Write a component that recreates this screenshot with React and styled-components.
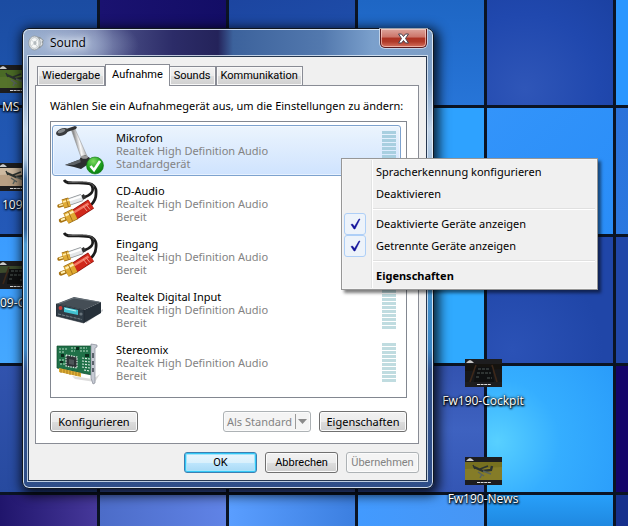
import React, { useState } from 'react';
import styled, { createGlobalStyle, css } from 'styled-components';

const GlobalStyle = createGlobalStyle`
  * {
    box-sizing: border-box;
  }

  body {
    margin: 0;
    font-family: 'Noto Sans', 'Open Sans', sans-serif;
    font-size: 11px;
    line-height: 13px;
    color: #000;
    overflow: hidden;
  }

  button {
    font: inherit;
    color: inherit;
  }
`;

/* ---------- desktop ---------- */

const Desktop = styled.main`
  position: relative;
  min-height: 100vh;
  padding: 28px 22px 37px;
  overflow: hidden;
`;

const Wallpaper = styled.div`
  position: absolute;
  inset: 0;
  display: grid;
  grid-template-columns: 97px repeat(4, 126px) 1fr;
  grid-template-rows: 105px repeat(3, 126px) 1fr;
  gap: 3px;
  background: #0b1424;
`;

const Tile = styled.div`
  background: ${({ $fill }) => $fill};
`;

const tiles = [
  'linear-gradient(#1b4ca2, #1e55ae)',
  'linear-gradient(to right, #1a1270, #130d66)',
  'linear-gradient(160deg, #1c45a0, #2056b4)',
  'linear-gradient(#1e66c4, #2775d8)',
  'radial-gradient(circle at 30% 85%, #2f56b8, #2048ae 60%, #1b41a2)',
  '#2b97ff',

  'linear-gradient(#2056b0, #2459b8)',
  '#171070',
  '#2560c0',
  '#2ea2ff',
  'linear-gradient(135deg, #3394fa, #298df8)',
  'linear-gradient(#2a72da, #2b78e0)',

  'linear-gradient(#3b9cff, #45a8ff)',
  '#2a80e0',
  '#2a80e0',
  '#30aaff',
  'radial-gradient(circle at 20% 90%, #2b52b6, #2046a8 60%)',
  '#2046a8',

  'linear-gradient(#3153ae, #274a9f)',
  '#4060c0',
  '#4060c0',
  'linear-gradient(#3353b0, #3e62c0 50%, #3456b4)',
  'radial-gradient(circle at 8% 60%, #58d0ff, #35aeff 45%, #2a9cfa)',
  '#14046a',

  'linear-gradient(to right, #20156c, #46389a)',
  'linear-gradient(to right, #4c6cc8, #6083e6)',
  'linear-gradient(to right, #5a9eff, #3c7fe0)',
  'linear-gradient(to right, #429aff, #4796f4)',
  'linear-gradient(#28a0fa, #1f88e0)',
  '#16308c',
];

const Shortcut = styled.figure`
  position: absolute;
  left: ${({ $x }) => $x}px;
  top: ${({ $y }) => $y}px;
  width: ${({ $w }) => $w || 100}px;
  margin: 0;
  display: flex;
  flex-direction: column;
  align-items: ${({ $start }) => ($start ? 'flex-start' : 'center')};
  gap: 6px;
`;

const ShortcutLabel = styled.figcaption`
  padding-left: ${({ $indent }) => $indent || 0}px;
  font-family: 'Open Sans', 'Noto Sans', sans-serif;
  font-size: 12px;
  line-height: 16px;
  white-space: nowrap;
  color: #fff;
  text-shadow: 0 1px 2px #000, 1px 1px 2px #000, 0 0 3px #000;
`;

/* ---------- window frame ---------- */

const Window = styled.section`
  position: relative;
  width: 100%;
  max-width: 412px;
  padding: 0 6px 7px 5px;
  border: 1px solid #10161f;
  border-radius: 7px;
  background:
    radial-gradient(ellipse 70px 30px at 46px 16px, rgba(190, 208, 232, 0.8), transparent),
    linear-gradient(transparent 50px, #c2d4e8 100px, #a9c3de 130px, #3d6a9c 150px, #2f5f98 200px, #4d9ad2 215px, #3b86c4 320px, #34558f 342px, #2f4e88),
    linear-gradient(to right, #8aa3c6, #68719f 72px, #4b5087 90px, #2c2c68 150px, #24235a 195px, #3c629c 210px, #5379ae 300px, #7ba0cc 350px, #7e9fc6);
  box-shadow: inset 0 0 0 1px rgba(235, 243, 252, 0.85), 2px 3px 12px 3px rgba(0, 0, 0, 0.8);
`;

const TitleBar = styled.header`
  display: flex;
  align-items: center;
  gap: 6px;
  height: 27px;
`;

const Title = styled.h1`
  flex: 1;
  margin: 0;
  font-family: 'Open Sans', 'Noto Sans', sans-serif;
  font-size: 12px;
  line-height: 16px;
  font-weight: 400;
  text-shadow: 0 0 6px #fff, 0 0 10px #fff;
`;

const CloseButton = styled.button`
  align-self: flex-start;
  display: grid;
  place-items: center;
  width: 47px;
  height: 19px;
  padding: 0;
  border: 1px solid #5c1a1c;
  border-top: 0;
  border-radius: 0 0 5px 5px;
  background: linear-gradient(#dda59c, #cc7468 45%, #ad3323 50%, #b03a28 70%, #d4715e);
  box-shadow: inset 0 0 0 1px rgba(255, 220, 214, 0.6), 0 0 0 1px rgba(230, 236, 246, 0.65);
`;

const Client = styled.div`
  padding: 7px 7px 7px 6px;
  border: 1px solid #26374f;
  background: #f0f0f0;
  box-shadow: 0 0 0 1px rgba(225, 236, 248, 0.8);
`;

/* ---------- tabs ---------- */

const TabList = styled.div`
  display: flex;
  align-items: flex-end;
  padding-left: 2px;
`;

const Tab = styled.button`
  height: 19px;
  padding: 0 4px 1px;
  border: 1px solid #898c95;
  border-left-width: ${({ $joined }) => ($joined ? 0 : 1)}px;
  border-bottom: 0;
  background: linear-gradient(#f3f3f3, #ebebeb 50%, #dddddd 51%, #d0d0d0);
  box-shadow: inset 0 0 0 1px #f8f8f8;
  font-family: Roboto, 'Noto Sans', sans-serif;
  white-space: nowrap;

  ${({ $active }) =>
    $active &&
    css`
      position: relative;
      height: 22px;
      margin-bottom: -1px;
      padding: 0 6px 3px;
      background: #fff;
      box-shadow: none;
    `}
`;

const TabPanel = styled.div`
  padding: 13px 11px 11px 14px;
  border: 1px solid #898c95;
  background: #fff;
`;

const Hint = styled.p`
  margin: 0 0 9px;
`;

/* ---------- device list ---------- */

const DeviceList = styled.ul`
  display: flex;
  flex-direction: column;
  gap: 2px;
  margin: 0;
  padding: 3px 5px 9px 1px;
  border: 1px solid #828790;
  list-style: none;
`;

const Device = styled.li`
  display: flex;
  align-items: center;
  height: 51px;
  padding: 0 4px 0 3px;
  border: 1px solid transparent;
  border-radius: 3px;

  ${({ $selected }) =>
    $selected &&
    css`
      border-color: #7da2ce;
      background: linear-gradient(#ebf4fd, #cfe3fe);
      box-shadow: inset 0 0 0 1px rgba(255, 255, 255, 0.5);
    `}
`;

const DeviceText = styled.div`
  flex: 1;
  padding-left: 12px;
`;

const DeviceName = styled.div``;

const DeviceInfo = styled.div`
  color: #838383;
`;

const Meter = styled.div`
  display: flex;
  flex-direction: column;
  gap: 1px;
  width: 14px;
`;

const MeterBar = styled.span`
  height: 3px;
  background: ${({ $selected }) => ($selected ? '#a8cfe0' : '#c0dce0')};
`;

/* ---------- buttons ---------- */

const Row = styled.div`
  display: flex;
  justify-content: flex-end;
  gap: 8px;
  margin-top: ${({ $top }) => $top}px;
`;

const PushButton = styled.button`
  width: ${({ $wide }) => ($wide ? 88 : 73)}px;
  height: 21px;
  margin-right: ${({ $pushLeft }) => ($pushLeft ? 'auto' : 0)};
  padding: 0;
  border: 1px solid #707070;
  border-radius: 3px;
  background: linear-gradient(#f2f2f2, #ebebeb 50%, #dddddd 51%, #cfcfcf);
  box-shadow: inset 0 0 0 1px #fbfbfb;
  white-space: nowrap;

  ${({ $wide }) =>
    !$wide &&
    css`
      font-family: Roboto, 'Noto Sans', sans-serif;
    `}

  ${({ $primary }) =>
    $primary &&
    css`
      border-color: #3c7fb1;
      background: linear-gradient(#eaf6fd, #d9f0fc 50%, #bee6fd 51%, #a7d9f5);
      box-shadow: inset 0 0 0 1px #33c8f6, inset 0 0 0 2px #a5e4fb;
    `}

  &:disabled {
    border-color: #adb2b5;
    background: #f4f4f4;
    color: #838383;
  }
`;

const SplitButton = styled(PushButton)`
  display: flex;
  align-items: center;
  justify-content: space-between;
  padding: 0 2px 0 3px;
`;

const SplitArrow = styled.span`
  display: grid;
  place-items: center;
  width: 13px;
  height: 15px;
  border-left: 1px solid #9a9a9a;
`;

/* ---------- context menu ---------- */

const Menu = styled.div`
  position: absolute;
  left: 318px;
  top: 129px;
  width: 257px;
  padding: 2px;
  border: 1px solid #979797;
  background: linear-gradient(to right, #f0f0f0 27px, #e2e3e3 27px, #e2e3e3 28px, #fff 28px, #fff 29px, #f0f0f0 29px);
  background-origin: content-box;
  box-shadow: inset 0 0 0 1px #f5f5f5, 3px 3px 3px rgba(0, 0, 0, 0.5);
`;

const MenuItem = styled.button`
  display: flex;
  align-items: center;
  gap: 10px;
  width: 100%;
  height: 22px;
  padding: 0;
  border: 0;
  background: none;
  font-weight: ${({ $strong }) => ($strong ? 700 : 400)};
  line-height: 22px;
  text-align: left;
  white-space: nowrap;
`;

const MenuLabel = styled.span`
  height: 22px;
`;

const CheckSlot = styled.span`
  display: grid;
  place-items: center;
  width: 22px;
  height: 22px;
  border: 1px solid ${({ $on }) => ($on ? '#aecff7' : 'transparent')};
  border-radius: 3px;
  background: ${({ $on }) => ($on ? '#edf3fa' : 'none')};
`;

const Separator = styled.hr`
  height: 2px;
  margin: 3px 0 3px 29px;
  border: 0;
  border-top: 1px solid #e0e0e0;
  border-bottom: 1px solid #fff;
`;

/* ---------- drawings ---------- */

const SpeakerIcon = () => (
  <svg width="16" height="16" viewBox="0 0 16 16">
    <path d="M8 1.500l4 .5 3.500 3-.5 5-3 3-4 1.500z" fill="#8f979c" />
    <path d="M11 3l2 .5 2 2-1 1.500 1 2-2 2.500-2 .5z" fill="#dfe3e5" stroke="#767f85" strokeWidth=".5" />
    <ellipse cx="6.500" cy="8" rx="5.800" ry="7" fill="#dde1e3" stroke="#8a9297" strokeWidth=".7" />
    <ellipse cx="6.500" cy="8" rx="4.300" ry="5.300" fill="#f6f8f8" stroke="#b5bbbe" strokeWidth=".6" />
    <path d="M3.500 5l3 3-3 3M9.500 4l-3 4 3 4" stroke="#c3c9cc" strokeWidth=".8" fill="none" />
    <ellipse cx="7" cy="8" rx="1.600" ry="2" fill="#b4bbbf" />
  </svg>
);

const MicrophoneIcon = () => (
  <svg width="48" height="49" viewBox="0 0 48 49">
    <defs>
      <linearGradient id="arm" x1="0" x2="1" y1=".35" y2="0">
        <stop offset=".2" stopColor="#8a8a8a" />
        <stop offset=".45" stopColor="#fafafa" />
        <stop offset=".65" stopColor="#c4c4c4" />
        <stop offset="1" stopColor="#777" />
      </linearGradient>
      <radialGradient id="tick" cx=".4" cy=".25" r=".8">
        <stop offset="0" stopColor="#7fdb62" />
        <stop offset=".55" stopColor="#21a421" />
        <stop offset="1" stopColor="#087a0d" />
      </radialGradient>
    </defs>
    <path d="M9 39l16-6 9 4-9 6-7-2z" fill="#2b2e31" />
    <path d="M9 39l16-6 3 2-10 4z" fill="#5d6266" />
    <path d="M15 3h4l12 27-5 4z" fill="url(#arm)" stroke="#8c8c8c" strokeWidth=".5" />
    <path d="M24 32l5-3 5 3-2 5-7 1z" fill="#2c2e30" />
    <ellipse cx="28.500" cy="31" rx="3.500" ry="1.800" fill="#9a9a9a" />
    <path d="M10 3l9-3 2 1-1 2-9 3z" fill="#2f3133" />
    <ellipse cx="6" cy="6" rx="6.200" ry="3.600" transform="rotate(-22 6 6)" fill="#3a3c3f" />
    <ellipse cx="5.500" cy="5" rx="4" ry="1.600" transform="rotate(-22 5.500 5)" fill="#85898c" />
    <circle cx="39" cy="39.500" r="8.500" fill="url(#tick)" stroke="#0b760f" strokeWidth=".6" />
    <path d="M34.500 40l3.500 4 6-9" fill="none" stroke="#fff" strokeWidth="2.600" />
  </svg>
);

const CableIcon = () => (
  <svg width="48" height="49" viewBox="0 0 48 49">
    <g fill="none">
      <path d="M8 1c3 5 10 2 19 3 9 0 14 3 13 11 0 5-2 8-5 11" stroke="#1c1c1c" strokeWidth="2.800" />
      <path d="M35 5c4 7 1 11-9 14" stroke="#1c1c1c" strokeWidth="2.600" />
      <path d="M12 3c5 1 9 0 15 0 6 0 10 2 11 5" stroke="#7d7d7d" strokeWidth=".7" />

      <path d="M29 17l-5 3" stroke="#333" strokeWidth="4.500" />
      <path d="M26 18.500L13 23" stroke="#8f9498" strokeWidth="7.500" />
      <path d="M26 18.500L13 23" stroke="#e4e7e9" strokeWidth="6" />
      <path d="M25 17.500L13 21.500" stroke="#fff" strokeWidth="2" />
      <path d="M8 25.500l-5 1.500" stroke="#a87210" strokeWidth="3.400" strokeLinecap="round" />
      <path d="M13.500 23L7 25" stroke="#9c6a10" strokeWidth="9.500" />
      <path d="M13.500 23L7 25" stroke="#e0ac38" strokeWidth="8" />
      <path d="M13 21l-6 2M7 25.500l-4 1" stroke="#ffeaa6" strokeWidth="1.700" />
      <path d="M10 19.500l2.500 8.500" stroke="#a6721a" strokeWidth=".9" />

      <path d="M35 25L18 36" stroke="#8c0f08" strokeWidth="11" />
      <path d="M35 25L18 36" stroke="#d0281b" strokeWidth="9.400" />
      <path d="M32.500 24.500L17 34" stroke="#f37a66" strokeWidth="2.400" />
      <path d="M27 27l4 5M30 25.500l4 5" stroke="#efa394" strokeWidth=".9" />
      <path d="M10 39.500l-5 2" stroke="#a87210" strokeWidth="4.400" strokeLinecap="round" />
      <path d="M19 35l-9 4.500" stroke="#94640d" strokeWidth="12" />
      <path d="M19 35l-9 4.500" stroke="#dfa932" strokeWidth="10.400" />
      <path d="M17.500 32.500l-8 4M9 39.500l-4 1.500" stroke="#fff0b4" strokeWidth="2.200" />
      <path d="M12.500 33l4 9" stroke="#a6721a" strokeWidth="1" />
    </g>
  </svg>
);

const ReceiverIcon = () => (
  <svg width="48" height="49" viewBox="0 0 48 49">
    <path d="M29 36l18-12v2L30 38z" fill="#b9bdc0" opacity=".7" />
    <path d="M0 19l18-7 27 5-17 8z" fill="#454e56" />
    <path d="M2 19l16-6 25 4" stroke="#6f7880" strokeWidth=".8" fill="none" />
    <path d="M28 25l17-8v11L28 38z" fill="#27313a" />
    <path d="M0 19l28 6v13L0 31z" fill="#303c46" stroke="#1b242b" strokeWidth=".6" />
    <path d="M8 22l14 3v5L8 27z" fill="#42c2d2" />
    <path d="M9 23.500l11 2.500" stroke="#b9f5f5" strokeWidth="1.200" />
    <circle cx="4.500" cy="23" r="1.900" fill="#cf3c37" />
    <circle cx="25" cy="29" r="1.600" fill="#67737b" />
    <path d="M2 29l24 5.500" stroke="#78838a" strokeWidth="1" strokeDasharray="3 1" />
  </svg>
);

const SoundCardIcon = () => (
  <svg width="48" height="49" viewBox="0 0 48 49">
    <path d="M16 38l21 3 7-5-5 8-20-3z" fill="#ddd" />
    <path d="M1 8h35v29L1 30z" fill="#1f7048" stroke="#0e4a2c" strokeWidth=".7" />
    <path d="M3 11h9M3 14h6M15 10h16M15 13h4M24 13h9M3 22h5M4 26h5" stroke="#b6dcc4" strokeDasharray="2 1" />
    <path d="M5 16h3v3H5zM29 16h4v3h-4zM4 23h3v2H4zM20 9h3v3h-3z" fill="#0b2c1c" />
    <path d="M10 17l11 2v11l-11-2z" fill="#2d3336" stroke="#d7e6dd" strokeWidth="1.300" strokeDasharray="1.500 1" />
    <path d="M13 21l5 1v5l-5-1z" fill="#4d5558" />
    <path d="M26 20l8 1M26 23l8 1M26 26l8 1M26 29l8 1M28 32l6 1" stroke="#d8e9de" strokeWidth="1.200" strokeDasharray="2 1" />
    <path d="M3 30l22 5v4L3 34z" fill="#dfae35" />
    <path d="M5 31v4M8 31v4M11 32v4M14 33v4M17 33v4M20 34v4M23 34v4" stroke="#8d6717" strokeWidth=".7" />
    <path d="M35 6l6 1v2l-2 1v35l-2 1-2-6z" fill="#c7cbd4" stroke="#858a96" strokeWidth=".7" />
    <path d="M36 15h2v5h-2zM36 23h2v4h-2zM36 30h2v4h-2z" fill="#5c626c" />
  </svg>
);

const CloseGlyph = () => (
  <svg width="13" height="11" viewBox="0 0 13 11">
    <path d="M1.500 1h3l2 2.500L8.500 1h3L8.500 5.500l3 4.500h-3l-2-2.500-2 2.500h-3l3-4.500z" fill="#fff" stroke="#4b4552" strokeWidth="1" />
  </svg>
);

const CheckGlyph = () => (
  <svg width="11" height="12" viewBox="0 0 11 12">
    <path d="M1 6.500l1.500-.5 2 2.500L9 1h1L5 11H4z" fill="#12129a" stroke="#12129a" strokeWidth=".5" />
  </svg>
);

const Thumbnail = ({ sky, land, plane, shift = 0 }) => (
  <svg width={37 - shift} height="28" viewBox={`${shift} 0 ${37 - shift} 28`}>
    <rect width="37" height="28" fill="#1d1d1f" />
    <rect y="5" width="37" height="18" fill={sky} />
    <path d="M0 12l37-2v13H0z" fill={land} />
    <path d="M1 4l2-2 2-1 2 1 2 2z" fill="#c9c9c9" />
    {plane ? (
      <g stroke="#2c3330" fill="none">
        <path d="M9 10l9 4 8-1 1-4" strokeWidth="2.400" />
        <path d="M8 8l2 4M15 12l8-3" strokeWidth="1.500" />
        <path d="M13 15l6 4M18 14l8 3M17 17l-2 4" stroke="#59635f" strokeWidth="1.400" />
      </g>
    ) : (
      <g fill="none">
        <path d="M5 23l6-17M32 23L27 6" stroke="#3d281a" strokeWidth="1.600" />
        <path d="M11 8h16l2 15H9z" fill="#0f1011" />
        <path d="M13 10h11M12 14h14M11 18h4M22 19h5" stroke="#2f3433" strokeWidth="2.200" strokeDasharray="3 1" />
      </g>
    )}
    <path d="M12 25.500h14" stroke="#ddd" strokeWidth="1" strokeDasharray="3 .6" />
  </svg>
);

/* ---------- data ---------- */

const devices = [
  { name: 'Mikrofon', status: 'Standardgerät', Icon: MicrophoneIcon },
  { name: 'CD-Audio', status: 'Bereit', Icon: CableIcon },
  { name: 'Eingang', status: 'Bereit', Icon: CableIcon },
  { name: 'Realtek Digital Input', status: 'Bereit', Icon: ReceiverIcon },
  { name: 'Stereomix', status: 'Bereit', Icon: SoundCardIcon },
];

const tabs = ['Wiedergabe', 'Aufnahme', 'Sounds', 'Kommunikation'];

const ContextMenu = () => {
  const [showDisabled, setShowDisabled] = useState(true);
  const [showDisconnected, setShowDisconnected] = useState(true);

  return (
    <Menu role="menu">
      <MenuItem role="menuitem">
        <CheckSlot />
        <MenuLabel>Spracherkennung konfigurieren</MenuLabel>
      </MenuItem>
      <MenuItem role="menuitem">
        <CheckSlot />
        <MenuLabel>Deaktivieren</MenuLabel>
      </MenuItem>
      <Separator />
      <MenuItem role="menuitemcheckbox" aria-checked={showDisabled} onClick={() => setShowDisabled(!showDisabled)}>
        <CheckSlot $on={showDisabled}>{showDisabled && <CheckGlyph />}</CheckSlot>
        <MenuLabel>Deaktivierte Geräte anzeigen</MenuLabel>
      </MenuItem>
      <MenuItem
        role="menuitemcheckbox"
        aria-checked={showDisconnected}
        onClick={() => setShowDisconnected(!showDisconnected)}
      >
        <CheckSlot $on={showDisconnected}>{showDisconnected && <CheckGlyph />}</CheckSlot>
        <MenuLabel>Getrennte Geräte anzeigen</MenuLabel>
      </MenuItem>
      <Separator />
      <MenuItem role="menuitem" $strong>
        <CheckSlot />
        <MenuLabel>Eigenschaften</MenuLabel>
      </MenuItem>
    </Menu>
  );
};

const App = () => {
  const [tab, setTab] = useState('Aufnahme');
  const [selected, setSelected] = useState('Mikrofon');

  return (
    <>
      <GlobalStyle />
      <Desktop>
        <Wallpaper>
          {tiles.map((fill, i) => (
            <Tile key={i} $fill={fill} />
          ))}
        </Wallpaper>

        <Shortcut $x={0} $y={65} $w={40} $start>
          <Thumbnail sky="#4a6a26" land="#55732b" plane shift={2} />
          <ShortcutLabel $indent={2}>MS</ShortcutLabel>
        </Shortcut>
        <Shortcut $x={0} $y={163} $w={40} $start>
          <Thumbnail sky="#cdb9a0" land="#b9a084" plane shift={2} />
          <ShortcutLabel $indent={2}>109</ShortcutLabel>
        </Shortcut>
        <Shortcut $x={0} $y={261} $w={40} $start>
          <Thumbnail sky="#3c4a2c" land="#1b1d1f" shift={2} />
          <ShortcutLabel>09-C</ShortcutLabel>
        </Shortcut>
        <Shortcut $x={433} $y={359}>
          <Thumbnail sky="#15130f" land="#17181a" />
          <ShortcutLabel>Fw190-Cockpit</ShortcutLabel>
        </Shortcut>
        <Shortcut $x={433} $y={457}>
          <Thumbnail sky="#77701f" land="#857c28" plane />
          <ShortcutLabel>Fw190-News</ShortcutLabel>
        </Shortcut>

        <Window aria-label="Sound">
          <TitleBar>
            <SpeakerIcon />
            <Title>Sound</Title>
            <CloseButton aria-label="Schließen">
              <CloseGlyph />
            </CloseButton>
          </TitleBar>

          <Client>
            <TabList role="tablist">
              {tabs.map((name) => (
                <Tab
                  key={name}
                  role="tab"
                  aria-selected={tab === name}
                  $active={tab === name}
                  $joined={name === 'Sounds'}
                  onClick={() => setTab(name)}
                >
                  {name}
                </Tab>
              ))}
            </TabList>

            <TabPanel role="tabpanel">
              <Hint>Wählen Sie ein Aufnahmegerät aus, um die Einstellungen zu ändern:</Hint>
              <DeviceList>
                {devices.map(({ name, status, Icon }) => (
                  <Device key={name} $selected={selected === name} onClick={() => setSelected(name)}>
                    <Icon />
                    <DeviceText>
                      <DeviceName>{name}</DeviceName>
                      <DeviceInfo>Realtek High Definition Audio</DeviceInfo>
                      <DeviceInfo>{status}</DeviceInfo>
                    </DeviceText>
                    <Meter>
                      {Array.from({ length: 10 }, (_, i) => (
                        <MeterBar key={i} $selected={selected === name} />
                      ))}
                    </Meter>
                  </Device>
                ))}
              </DeviceList>
              <Row $top={13}>
                <PushButton $wide $pushLeft>
                  Konfigurieren
                </PushButton>
                <SplitButton $wide disabled>
                  Als Standard
                  <SplitArrow>
                    <svg width="9" height="5" viewBox="0 0 9 5">
                      <path d="M0 0h9L4.500 5z" fill="#8a8a8a" />
                    </svg>
                  </SplitArrow>
                </SplitButton>
                <PushButton $wide>Eigenschaften</PushButton>
              </Row>
            </TabPanel>

            <Row $top={8}>
              <PushButton $primary>OK</PushButton>
              <PushButton>Abbrechen</PushButton>
              <PushButton disabled>Übernehmen</PushButton>
            </Row>
          </Client>

          <ContextMenu />
        </Window>
      </Desktop>
    </>
  );
};

export default App;
